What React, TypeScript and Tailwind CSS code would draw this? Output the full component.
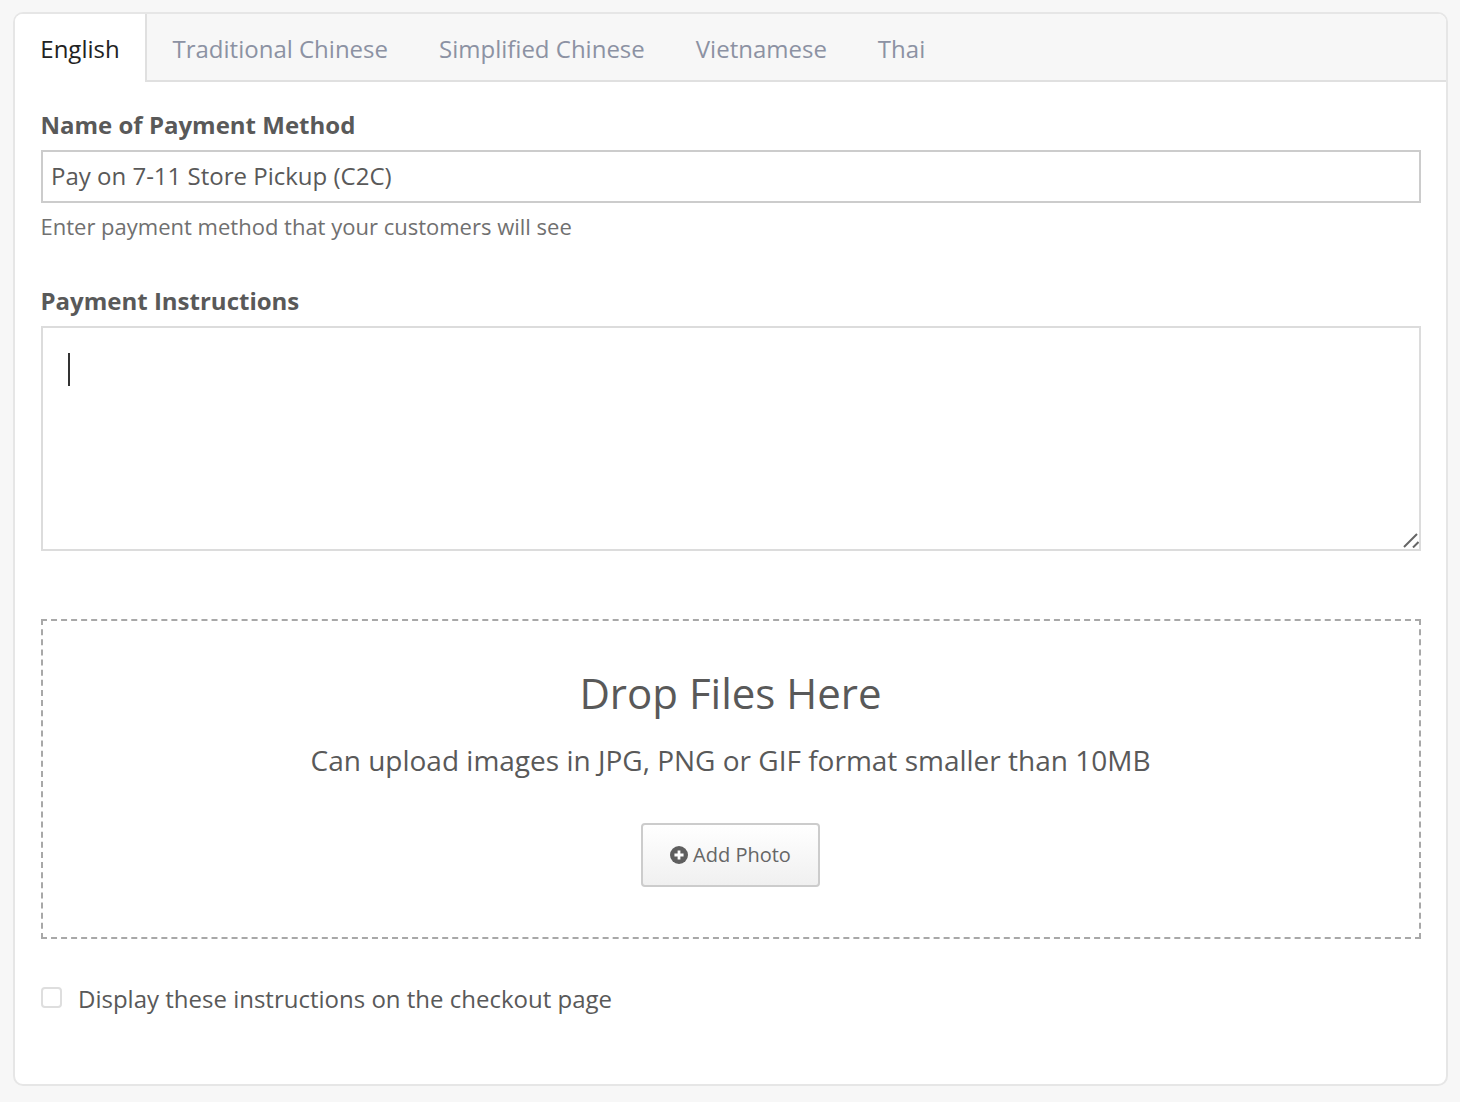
const tabs = ['Traditional Chinese', 'Simplified Chinese', 'Vietnamese', 'Thai'];

export default function App() {
  return (
    <div className="min-h-[1102px] bg-[#f7f7f7] pl-[13px] pr-[12px] pt-[12px] pb-[16px] font-['Open_Sans',sans-serif] text-[#595959]">
      <div className="h-[1074px] rounded-[10px] border-2 border-[#e6e6e6] bg-white overflow-hidden">
        {/* Tabs */}
        <div className="flex h-[68px] bg-[#f7f7f7] border-b-2 border-[#e0e0e0]">
          <div className="h-[68px] w-[132px] bg-white border-r-2 border-[#e0e0e0] flex items-center justify-center text-[24px] text-[#222] pt-[2px]">
            English
          </div>
          <div className="flex items-center gap-[51px] pl-[25.5px] pt-[4px] text-[24px] text-[#8c92a3]">
            {tabs.map((tab) => (
              <span key={tab}>{tab}</span>
            ))}
          </div>
        </div>

        <div className="px-[26px]">
          {/* Name */}
          <div className="mt-[25px] -ml-[0.5px] text-[24px] leading-[36px] font-bold">Name of Payment Method</div>
          <input
            readOnly
            value="Pay on 7-11 Store Pickup (C2C)"
            className="mt-[7px] block w-[1380px] h-[53px] border-2 border-[#cccccc] px-[8px] pb-[2px] text-[24px] text-[#595959] outline-none"
          />
          <div className="mt-[5px] -ml-[0.5px] text-[22px] leading-[36px] text-[#707070]">Enter payment method that your customers will see</div>

          {/* Instructions */}
          <div className="mt-[39px] -ml-[0.5px] text-[24px] leading-[36px] font-bold">Payment Instructions</div>
          <div className="relative mt-[7px] w-[1380px]">
            <textarea readOnly className="block w-full h-[225px] resize-none border-2 border-[#dcdcdc] outline-none" />
            <div className="absolute left-[27px] top-[27px] h-[33px] w-[2px] bg-[#333]" />
            <svg className="absolute right-[2px] bottom-[3px]" width="16" height="15" viewBox="0 0 16 15">
              <path d="M1 14L14 1M10 14.5L15.5 9" stroke="#666" strokeWidth="2" fill="none" />
            </svg>
          </div>

          {/* Upload */}
          <div className="mt-[68px] w-[1380px] h-[320px] pr-[1px] border-2 border-dashed border-[#a8a8a8] flex flex-col items-center">
            <div className="mt-[42px] text-[42px] leading-[60px]">Drop Files Here</div>
            <div className="mt-[17px] text-[28px] leading-[40px]">Can upload images in JPG, PNG or GIF format smaller than 10MB</div>
            <button className="mt-[43px] w-[179px] h-[64px] rounded-[4px] border-2 border-[#cccccc] bg-gradient-to-b from-white to-[#f0f0f0] flex items-center justify-center gap-[5px] text-[20px] text-[#666]">
              <svg width="18" height="18" viewBox="0 0 17 17">
                <circle cx="8.5" cy="8.5" r="8.5" fill="#5f5f5f" />
                <path d="M8.5 4.2v8.6M4.2 8.5h8.6" stroke="#fff" strokeWidth="2.6" />
              </svg>
              Add Photo
            </button>
          </div>

          {/* Checkbox */}
          <label className="mt-[42px] flex items-center gap-[16px] text-[24px] leading-[36px]">
            <span className="mb-[4px] w-[21px] h-[21px] rounded-[4px] border-2 border-[#dedede] bg-white" />
            Display these instructions on the checkout page
          </label>
        </div>
      </div>
    </div>
  );
}
